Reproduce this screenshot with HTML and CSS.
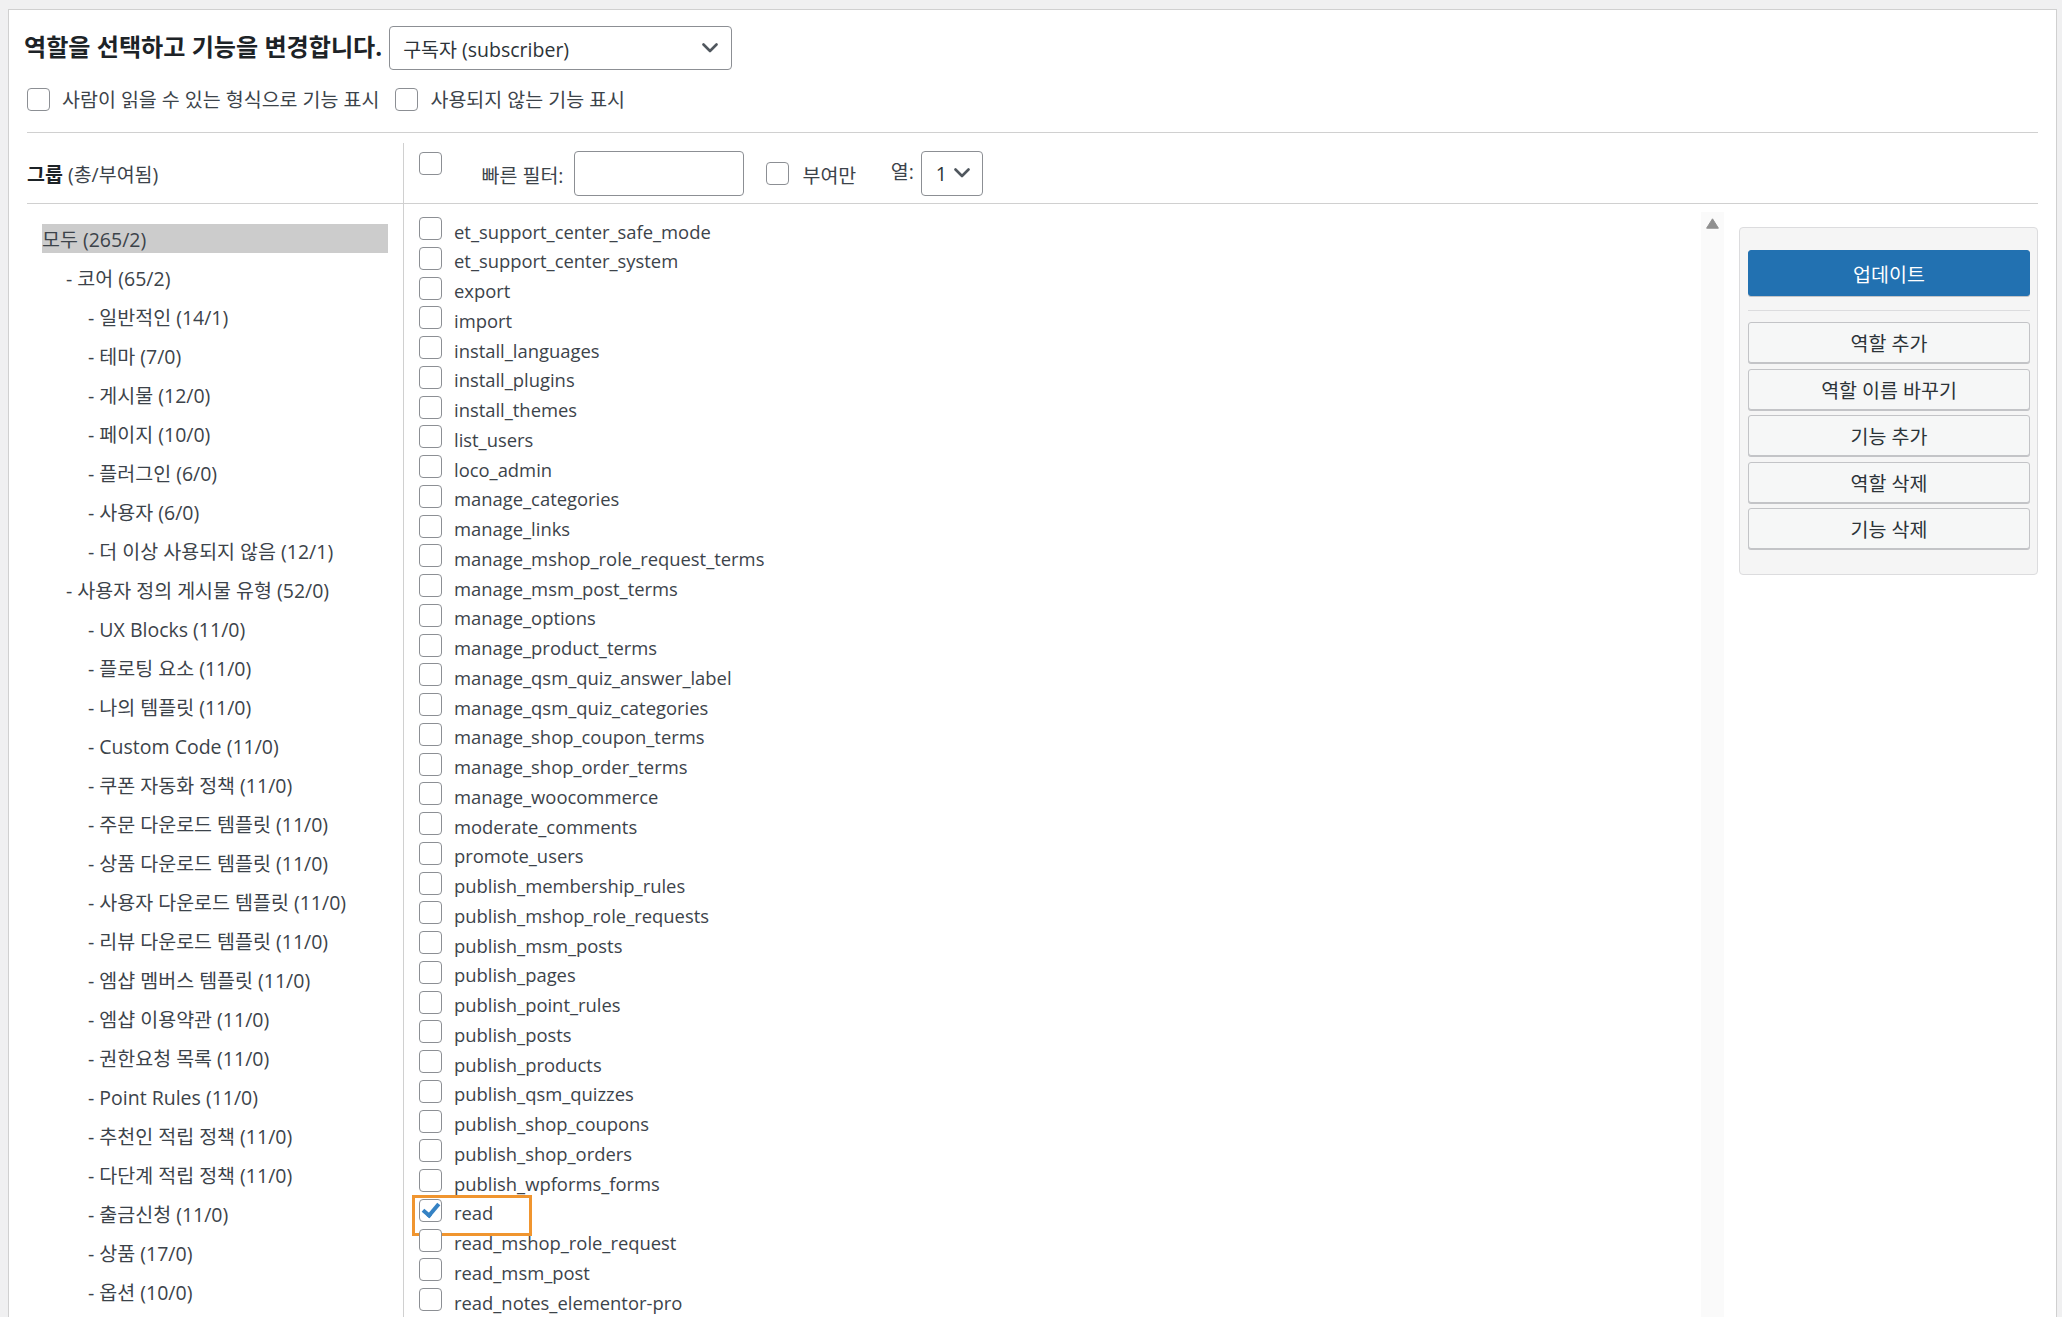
FILE: index.html
```html
<!doctype html>
<html lang="ko">
<head>
    <meta charset="UTF-8">
    <meta name="viewport" content="width=device-width, initial-scale=1.0">
    <title>역할 편집기 - 기능 변경</title>
    <link rel="stylesheet" href="styles.css">
</head>
<body>

<div class="wrap">

    <div class="top">
        <div class="role-row">
            <h2>역할을 선택하고 기능을 변경합니다.</h2>
            <div class="select role-select">
                <span>구독자 (subscriber)</span>
                <svg width="16" height="10" viewBox="0 0 16 10"><path d="M1.5 1.5 L8 8 L14.5 1.5" fill="none" stroke="#50575e" stroke-width="2.6" stroke-linecap="round" stroke-linejoin="round"/></svg>
            </div>
        </div>
        <div class="options">
            <label class="first"><input type="checkbox"> 사람이 읽을 수 있는 형식으로 기능 표시</label>
            <label><input type="checkbox"> 사용되지 않는 기능 표시</label>
        </div>
    </div>

    <div class="head">
        <div class="head-groups"><b>그룹</b> (총/부여됨)</div>
        <div class="head-caps">
            <input type="checkbox" class="check-all">
            <label class="filter">빠른 필터: <input type="text"></label>
            <label class="granted"><input type="checkbox"> 부여만</label>
            <span class="cols-label">열:</span>
            <div class="select cols-select">
                <span>1</span>
                <svg width="16" height="10" viewBox="0 0 16 10"><path d="M1.5 1.5 L8 8 L14.5 1.5" fill="none" stroke="#50575e" stroke-width="2.6" stroke-linecap="round" stroke-linejoin="round"/></svg>
            </div>
        </div>
    </div>

    <div class="main">

        <ul class="groups">
            <li class="lv0 current">모두 (265/2)</li>
            <li class="lv1">- 코어 (65/2)</li>
            <li class="lv2">- 일반적인 (14/1)</li>
            <li class="lv2">- 테마 (7/0)</li>
            <li class="lv2">- 게시물 (12/0)</li>
            <li class="lv2">- 페이지 (10/0)</li>
            <li class="lv2">- 플러그인 (6/0)</li>
            <li class="lv2">- 사용자 (6/0)</li>
            <li class="lv2">- 더 이상 사용되지 않음 (12/1)</li>
            <li class="lv1">- 사용자 정의 게시물 유형 (52/0)</li>
            <li class="lv2">- UX Blocks (11/0)</li>
            <li class="lv2">- 플로팅 요소 (11/0)</li>
            <li class="lv2">- 나의 템플릿 (11/0)</li>
            <li class="lv2">- Custom Code (11/0)</li>
            <li class="lv2">- 쿠폰 자동화 정책 (11/0)</li>
            <li class="lv2">- 주문 다운로드 템플릿 (11/0)</li>
            <li class="lv2">- 상품 다운로드 템플릿 (11/0)</li>
            <li class="lv2">- 사용자 다운로드 템플릿 (11/0)</li>
            <li class="lv2">- 리뷰 다운로드 템플릿 (11/0)</li>
            <li class="lv2">- 엠샵 멤버스 템플릿 (11/0)</li>
            <li class="lv2">- 엠샵 이용약관 (11/0)</li>
            <li class="lv2">- 권한요청 목록 (11/0)</li>
            <li class="lv2">- Point Rules (11/0)</li>
            <li class="lv2">- 추천인 적립 정책 (11/0)</li>
            <li class="lv2">- 다단계 적립 정책 (11/0)</li>
            <li class="lv2">- 출금신청 (11/0)</li>
            <li class="lv2">- 상품 (17/0)</li>
            <li class="lv2">- 옵션 (10/0)</li>
        </ul>

        <div class="caps">
            <div class="cap-scroll">
                <div class="cap-list">
                    <div class="cap"><label><input type="checkbox"> et_support_center_safe_mode</label></div>
                    <div class="cap"><label><input type="checkbox"> et_support_center_system</label></div>
                    <div class="cap"><label><input type="checkbox"> export</label></div>
                    <div class="cap"><label><input type="checkbox"> import</label></div>
                    <div class="cap"><label><input type="checkbox"> install_languages</label></div>
                    <div class="cap"><label><input type="checkbox"> install_plugins</label></div>
                    <div class="cap"><label><input type="checkbox"> install_themes</label></div>
                    <div class="cap"><label><input type="checkbox"> list_users</label></div>
                    <div class="cap"><label><input type="checkbox"> loco_admin</label></div>
                    <div class="cap"><label><input type="checkbox"> manage_categories</label></div>
                    <div class="cap"><label><input type="checkbox"> manage_links</label></div>
                    <div class="cap"><label><input type="checkbox"> manage_mshop_role_request_terms</label></div>
                    <div class="cap"><label><input type="checkbox"> manage_msm_post_terms</label></div>
                    <div class="cap"><label><input type="checkbox"> manage_options</label></div>
                    <div class="cap"><label><input type="checkbox"> manage_product_terms</label></div>
                    <div class="cap"><label><input type="checkbox"> manage_qsm_quiz_answer_label</label></div>
                    <div class="cap"><label><input type="checkbox"> manage_qsm_quiz_categories</label></div>
                    <div class="cap"><label><input type="checkbox"> manage_shop_coupon_terms</label></div>
                    <div class="cap"><label><input type="checkbox"> manage_shop_order_terms</label></div>
                    <div class="cap"><label><input type="checkbox"> manage_woocommerce</label></div>
                    <div class="cap"><label><input type="checkbox"> moderate_comments</label></div>
                    <div class="cap"><label><input type="checkbox"> promote_users</label></div>
                    <div class="cap"><label><input type="checkbox"> publish_membership_rules</label></div>
                    <div class="cap"><label><input type="checkbox"> publish_mshop_role_requests</label></div>
                    <div class="cap"><label><input type="checkbox"> publish_msm_posts</label></div>
                    <div class="cap"><label><input type="checkbox"> publish_pages</label></div>
                    <div class="cap"><label><input type="checkbox"> publish_point_rules</label></div>
                    <div class="cap"><label><input type="checkbox"> publish_posts</label></div>
                    <div class="cap"><label><input type="checkbox"> publish_products</label></div>
                    <div class="cap"><label><input type="checkbox"> publish_qsm_quizzes</label></div>
                    <div class="cap"><label><input type="checkbox"> publish_shop_coupons</label></div>
                    <div class="cap"><label><input type="checkbox"> publish_shop_orders</label></div>
                    <div class="cap"><label><input type="checkbox"> publish_wpforms_forms</label></div>
                    <div class="cap"><label class="marked"><input type="checkbox" checked> read</label></div>
                    <div class="cap"><label><input type="checkbox"> read_mshop_role_request</label></div>
                    <div class="cap"><label><input type="checkbox"> read_msm_post</label></div>
                    <div class="cap"><label><input type="checkbox"> read_notes_elementor-pro</label></div>
                </div>
            </div>
            <div class="scrollbar">
                <svg width="13" height="11" viewBox="0 0 13 11"><path d="M6.5 0.8 L12.4 10.2 L0.6 10.2 Z" fill="#8f8f8f" stroke="#8f8f8f" stroke-width="1" stroke-linejoin="round"/></svg>
            </div>
        </div>

        <div class="sidebar">
            <button class="btn primary">업데이트</button>
            <div class="sep"></div>
            <button class="btn">역할 추가</button>
            <button class="btn">역할 이름 바꾸기</button>
            <button class="btn">기능 추가</button>
            <button class="btn">역할 삭제</button>
            <button class="btn">기능 삭제</button>
        </div>

    </div>
</div>

</body>
</html>
```

FILE: styles.css
```css
html, body {
    overflow: hidden;
}
body {
    margin: 0;
    background: #f0f0f1;
    font-family: "Open Sans", "Noto Sans CJK KR", sans-serif;
    font-size: 19.5px;
    color: #3c434a;
}
.wrap {
    margin: 9px 5px 0 8px;
    padding: 0 18px;
    background: #fff;
    border: 1px solid #d0d0d0;
    border-bottom: none;
    height: 1400px;
}
input[type=checkbox] {
    appearance: none;
    -webkit-appearance: none;
    flex: none;
    width: 23px;
    height: 23px;
    margin: 0;
    border: 1px solid #8c8f94;
    border-radius: 4px;
    background: #fff;
    position: relative;
}
input[type=checkbox]:checked::before {
    content: "";
    position: absolute;
    left: 6px;
    top: 0px;
    width: 6px;
    height: 13px;
    border: solid #3582c4;
    border-width: 0 4.5px 4.5px 0;
    transform: rotate(40deg);
}
.select {
    display: flex;
    align-items: center;
    justify-content: space-between;
    box-sizing: border-box;
    height: 44px;
    border: 1px solid #8c8f94;
    border-radius: 4px;
    background: #fff;
    color: #2c3338;
}

/* top */
.top {
    padding: 16px 0 21px 0;
    border-bottom: 1px solid #d0d0d0;
}
.role-row {
    display: flex;
    align-items: center;
    gap: 7px;
    height: 44px;
}
.role-row h2 {
    margin: 0 0 3px -3px;
    font-size: 24.1px;
    line-height: 34px;
    font-weight: 700;
    color: #1d2327;
}
.role-select {
    width: 343px;
    padding: 0 13px 0 13px;
}
.options {
    display: flex;
    margin-top: 18px;
    height: 23px;
}
.options label {
    display: inline-flex;
    align-items: center;
    gap: 12px;
    line-height: 23px;
}
.options label.first {
    margin-right: 16px;
}

/* header */
.head {
    display: flex;
    padding-top: 10px;
    border-bottom: 1px solid #d0d0d0;
}
.head-groups {
    width: 377px;
    height: 60px;
    border-right: 1px solid #d0d0d0;
    display: flex;
    align-items: center;
    box-sizing: border-box;
}
.head-groups b {
    font-weight: 700;
    color: #1d2327;
    margin-right: 5px;
}
.head-caps {
    flex: 1;
    display: flex;
    align-items: center;
    padding-left: 15px;
    height: 60px;
}
.check-all {
    align-self: flex-start;
    margin-top: 9px !important;
}
.filter {
    display: inline-flex;
    align-items: center;
    gap: 11px;
    margin-left: 39.5px;
    padding-top: 3px;
}
.filter input {
    box-sizing: border-box;
    width: 170px;
    height: 45px;
    margin: -3px 0 0 0;
    border: 1px solid #8c8f94;
    border-radius: 4px;
}
.granted {
    display: inline-flex;
    align-items: center;
    gap: 13px;
    margin-left: 22px;
    padding-top: 3px;
}
.granted input {
    margin-top: -3px;
}
.cols-label {
    margin-left: 34.5px;
    margin-bottom: 6px;
}
.cols-select {
    width: 62px;
    height: 45px;
    margin-left: 7px;
    padding: 0 12px 0 14px;
}

/* main area */
.main {
    display: flex;
    align-items: stretch;
}
.groups {
    list-style: none;
    margin: 0;
    width: 377px;
    padding: 20px 15px 0 15px;
    box-sizing: border-box;
    border-right: 1px solid #d0d0d0;
}
.groups li {
    padding-top: 3px;
    line-height: 26px;
    height: 26px;
    margin-bottom: 10px;
    white-space: nowrap;
}
.groups li.current {
    background: #cccccc;
}
.groups li.lv1 {
    padding-left: 24px;
}
.groups li.lv2 {
    padding-left: 46px;
}
.caps {
    flex: 1;
    display: flex;
    padding-top: 7px;
}
.cap-scroll {
    flex: 1;
    height: 1200px;
    overflow: hidden;
    padding-left: 15px;
    font-size: 18.4px;
}
.cap-list {
    margin-top: 5.25px;
}
.cap {
    height: 29.75px;
    display: flex;
    align-items: center;
}
.cap label {
    display: inline-flex;
    align-items: center;
    gap: 12px;
    position: relative;
}
.cap input {
    margin-top: -5px;
}
.cap label.marked::after {
    content: "";
    position: absolute;
    left: -7px;
    top: -5px;
    width: 114px;
    height: 35px;
    border: 3px solid #f0952f;
}
.scrollbar {
    width: 23px;
    margin-top: 1px;
    background: #fafafa;
    display: flex;
    justify-content: center;
    align-items: flex-start;
    padding-top: 6px;
    box-sizing: border-box;
}

/* sidebar */
.sidebar {
    width: 299px;
    box-sizing: border-box;
    align-self: flex-start;
    margin: 23px 0 0 15px;
    padding: 22px 7px 25px 8px;
    background: #f5f5f5;
    border: 1px solid #dcdcde;
    border-radius: 4px;
    display: flex;
    flex-direction: column;
}
.btn {
    height: 41px;
    margin-bottom: 5.5px;
    font-family: inherit;
    font-size: 19.5px;
    color: #2c3338;
    background: #f6f7f7;
    border: 1px solid #c3c4c7;
    border-radius: 3px;
    box-shadow: 0 1px 0 #c3c4c7;
    cursor: pointer;
}
.btn:last-child {
    margin-bottom: 0;
}
.btn.primary {
    height: 46px;
    margin-bottom: 0;
    background: #2271b1;
    border-color: #2271b1;
    color: #fff;
}
.sep {
    height: 1px;
    background: #dcdcde;
    margin: 14px 0 11px 0;
}
```
